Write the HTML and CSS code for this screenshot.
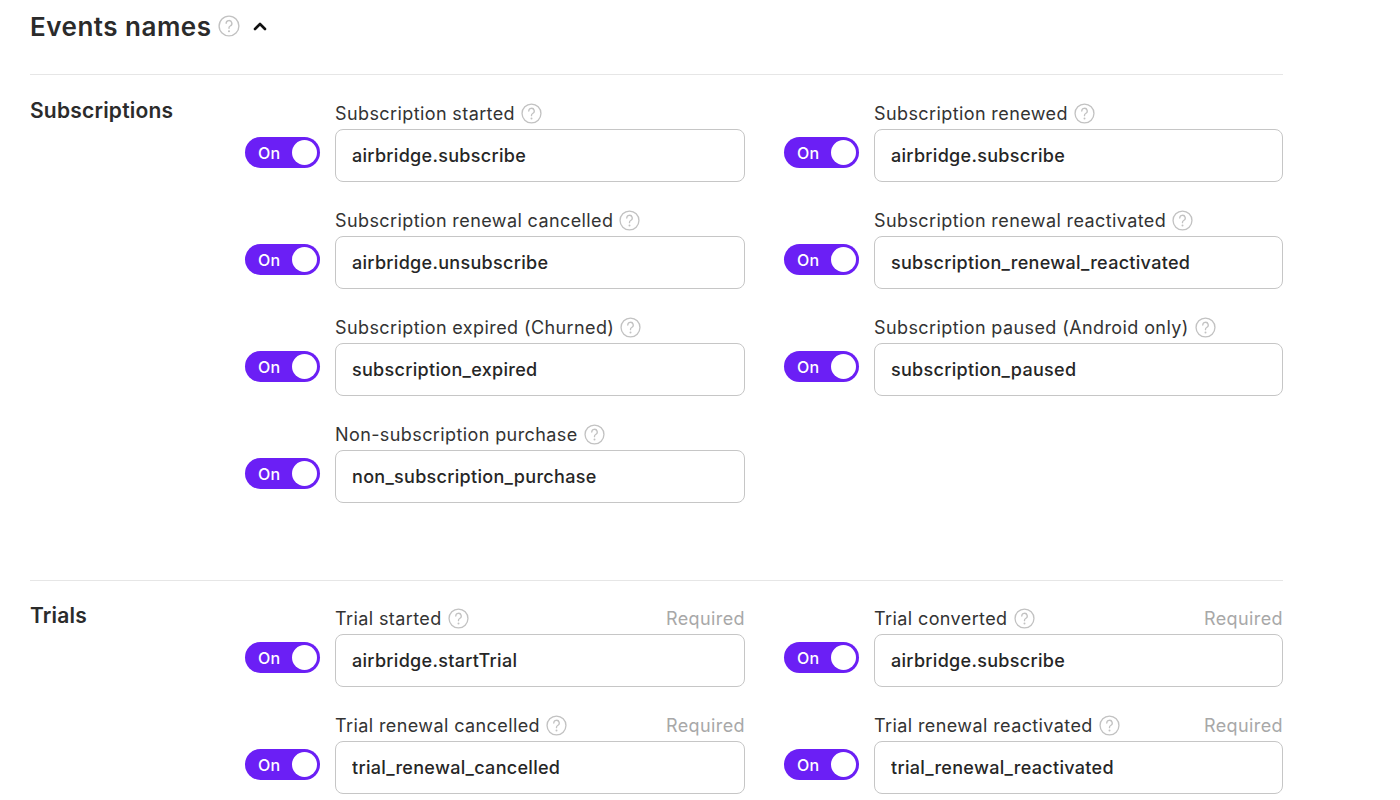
FILE: index.html
```html
<!DOCTYPE html>
<html lang="en">
<head>
    <meta charset="UTF-8">
    <meta name="viewport" content="width=device-width, initial-scale=1.0">
    <title>Events names</title>
    <link rel="stylesheet" href="styles.css">
</head>
<body>
    <div class="settings">
        <div class="title-row">
            <h1>Events names</h1>
            <svg class="help help-lg" viewBox="0 0 20 20"><circle cx="10" cy="10" r="9" /><path d="M7.4 7.6a2.6 2.6 0 1 1 3.7 2.4c-.8.4-1.1.9-1.1 1.6v.5" /><circle class="dot" cx="10" cy="14.7" r=".95" /></svg>
            <svg class="chevron" viewBox="0 0 14 10"><path d="M2 8l5-5 5 5" /></svg>
        </div>

        <section class="group">
            <h2>Subscriptions</h2>
            <div class="fields">
                <div class="field">
                    <div class="field-head"><span class="label">Subscription started</span><svg class="help" viewBox="0 0 20 20"><circle cx="10" cy="10" r="9" /><path d="M7.4 7.6a2.6 2.6 0 1 1 3.7 2.4c-.8.4-1.1.9-1.1 1.6v.5" /><circle class="dot" cx="10" cy="14.7" r=".95" /></svg></div>
                    <div class="toggle"><span>On</span><i></i></div>
                    <input type="text" value="airbridge.subscribe">
                </div>
                <div class="field">
                    <div class="field-head"><span class="label">Subscription renewed</span><svg class="help" viewBox="0 0 20 20"><circle cx="10" cy="10" r="9" /><path d="M7.4 7.6a2.6 2.6 0 1 1 3.7 2.4c-.8.4-1.1.9-1.1 1.6v.5" /><circle class="dot" cx="10" cy="14.7" r=".95" /></svg></div>
                    <div class="toggle"><span>On</span><i></i></div>
                    <input type="text" value="airbridge.subscribe">
                </div>
                <div class="field">
                    <div class="field-head"><span class="label">Subscription renewal cancelled</span><svg class="help" viewBox="0 0 20 20"><circle cx="10" cy="10" r="9" /><path d="M7.4 7.6a2.6 2.6 0 1 1 3.7 2.4c-.8.4-1.1.9-1.1 1.6v.5" /><circle class="dot" cx="10" cy="14.7" r=".95" /></svg></div>
                    <div class="toggle"><span>On</span><i></i></div>
                    <input type="text" value="airbridge.unsubscribe">
                </div>
                <div class="field">
                    <div class="field-head"><span class="label">Subscription renewal reactivated</span><svg class="help" viewBox="0 0 20 20"><circle cx="10" cy="10" r="9" /><path d="M7.4 7.6a2.6 2.6 0 1 1 3.7 2.4c-.8.4-1.1.9-1.1 1.6v.5" /><circle class="dot" cx="10" cy="14.7" r=".95" /></svg></div>
                    <div class="toggle"><span>On</span><i></i></div>
                    <input type="text" value="subscription_renewal_reactivated">
                </div>
                <div class="field">
                    <div class="field-head"><span class="label">Subscription expired (Churned)</span><svg class="help" viewBox="0 0 20 20"><circle cx="10" cy="10" r="9" /><path d="M7.4 7.6a2.6 2.6 0 1 1 3.7 2.4c-.8.4-1.1.9-1.1 1.6v.5" /><circle class="dot" cx="10" cy="14.7" r=".95" /></svg></div>
                    <div class="toggle"><span>On</span><i></i></div>
                    <input type="text" value="subscription_expired">
                </div>
                <div class="field">
                    <div class="field-head"><span class="label">Subscription paused (Android only)</span><svg class="help" viewBox="0 0 20 20"><circle cx="10" cy="10" r="9" /><path d="M7.4 7.6a2.6 2.6 0 1 1 3.7 2.4c-.8.4-1.1.9-1.1 1.6v.5" /><circle class="dot" cx="10" cy="14.7" r=".95" /></svg></div>
                    <div class="toggle"><span>On</span><i></i></div>
                    <input type="text" value="subscription_paused">
                </div>
                <div class="field">
                    <div class="field-head"><span class="label">Non-subscription purchase</span><svg class="help" viewBox="0 0 20 20"><circle cx="10" cy="10" r="9" /><path d="M7.4 7.6a2.6 2.6 0 1 1 3.7 2.4c-.8.4-1.1.9-1.1 1.6v.5" /><circle class="dot" cx="10" cy="14.7" r=".95" /></svg></div>
                    <div class="toggle"><span>On</span><i></i></div>
                    <input type="text" value="non_subscription_purchase">
                </div>
            </div>
        </section>

        <section class="group">
            <h2>Trials</h2>
            <div class="fields">
                <div class="field">
                    <div class="field-head"><span class="label">Trial started</span><svg class="help" viewBox="0 0 20 20"><circle cx="10" cy="10" r="9" /><path d="M7.4 7.6a2.6 2.6 0 1 1 3.7 2.4c-.8.4-1.1.9-1.1 1.6v.5" /><circle class="dot" cx="10" cy="14.7" r=".95" /></svg><span class="required">Required</span></div>
                    <div class="toggle"><span>On</span><i></i></div>
                    <input type="text" value="airbridge.startTrial">
                </div>
                <div class="field">
                    <div class="field-head"><span class="label">Trial converted</span><svg class="help" viewBox="0 0 20 20"><circle cx="10" cy="10" r="9" /><path d="M7.4 7.6a2.6 2.6 0 1 1 3.7 2.4c-.8.4-1.1.9-1.1 1.6v.5" /><circle class="dot" cx="10" cy="14.7" r=".95" /></svg><span class="required">Required</span></div>
                    <div class="toggle"><span>On</span><i></i></div>
                    <input type="text" value="airbridge.subscribe">
                </div>
                <div class="field">
                    <div class="field-head"><span class="label">Trial renewal cancelled</span><svg class="help" viewBox="0 0 20 20"><circle cx="10" cy="10" r="9" /><path d="M7.4 7.6a2.6 2.6 0 1 1 3.7 2.4c-.8.4-1.1.9-1.1 1.6v.5" /><circle class="dot" cx="10" cy="14.7" r=".95" /></svg><span class="required">Required</span></div>
                    <div class="toggle"><span>On</span><i></i></div>
                    <input type="text" value="trial_renewal_cancelled">
                </div>
                <div class="field">
                    <div class="field-head"><span class="label">Trial renewal reactivated</span><svg class="help" viewBox="0 0 20 20"><circle cx="10" cy="10" r="9" /><path d="M7.4 7.6a2.6 2.6 0 1 1 3.7 2.4c-.8.4-1.1.9-1.1 1.6v.5" /><circle class="dot" cx="10" cy="14.7" r=".95" /></svg><span class="required">Required</span></div>
                    <div class="toggle"><span>On</span><i></i></div>
                    <input type="text" value="trial_renewal_reactivated">
                </div>
            </div>
        </section>
    </div>
</body>
</html>
```

FILE: styles.css
```css
body {
    margin: 0;
    background: #ffffff;
    font-family: Inter, "Noto Sans", sans-serif;
    color: #2a2a2a;
}

.settings {
    width: 1253px;
    padding-left: 30px;
}

.title-row {
    display: flex;
    align-items: center;
    height: 36px;
    padding-top: 8px;
    margin-bottom: 30px;
}

h1 {
    margin: 0;
    font-size: 26px;
    font-weight: 600;
    letter-spacing: 0.5px;
    color: #2b2b2b;
}

.help {
    width: 21px;
    height: 21px;
    flex: none;
    margin-left: 6px;
    fill: none;
    stroke: #c2c2c2;
    stroke-width: 1.25;
    stroke-linecap: round;
}

.help .dot {
    fill: #c2c2c2;
    stroke: none;
}

.help-lg {
    width: 22px;
    height: 22px;
}

.chevron {
    width: 14px;
    height: 10px;
    margin-left: 13px;
    fill: none;
    stroke: #111;
    stroke-width: 2.6;
    stroke-linecap: round;
    stroke-linejoin: round;
}

.group {
    display: flex;
    border-top: 1px solid #e6e6e6;
    padding: 27px 0 77px;
}

.group:last-child {
    padding: 26px 0 20px;
}

h2 {
    width: 215px;
    flex: none;
    margin: 0;
    font-size: 21px;
    font-weight: 600;
    letter-spacing: 0.2px;
    line-height: 18px;
    color: #2b2b2b;
}

.fields {
    display: grid;
    grid-template-columns: 500px 499px;
    column-gap: 39px;
    row-gap: 27px;
    align-content: start;
}

.field {
    display: grid;
    grid-template-columns: 75px 1fr;
    column-gap: 15px;
    row-gap: 5px;
}

.field-head {
    grid-column: 2;
    display: flex;
    align-items: center;
    height: 22px;
    font-size: 18px;
    letter-spacing: 0.4px;
    color: #333;
}

.required {
    margin-left: auto;
    color: #a8a8a8;
}

.toggle {
    grid-column: 1;
    align-self: start;
    margin-top: 8px;
    height: 31px;
    border-radius: 16px;
    background: #6b1ff5;
    display: flex;
    align-items: center;
    justify-content: space-between;
    padding: 0 3px 0 13px;
    color: #fff;
    font-size: 16px;
    font-weight: 500;
    letter-spacing: 0.3px;
}

.toggle i {
    width: 25px;
    height: 25px;
    border-radius: 50%;
    background: #fff;
}

.field input {
    grid-column: 2;
    box-sizing: border-box;
    height: 53px;
    width: 100%;
    border: 1px solid #c6c6c6;
    border-radius: 8px;
    padding: 0 16px;
    font-family: inherit;
    font-size: 18px;
    font-weight: 500;
    letter-spacing: 0.3px;
    color: #262626;
    outline: none;
}
```
